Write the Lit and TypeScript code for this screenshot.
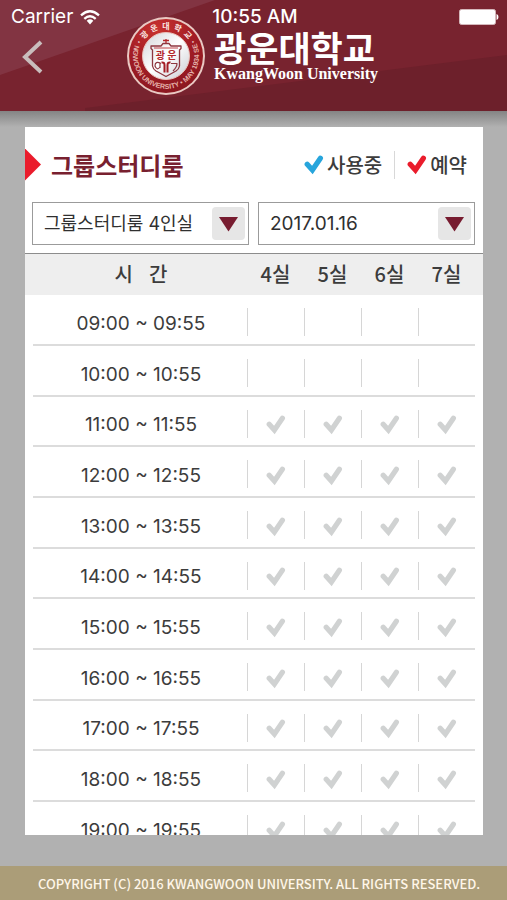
import { LitElement, html, css, svg } from "lit";
import { customElement, property, state } from "lit/decorators.js";

@customElement("check-mark")
class CheckMark extends LitElement {
  @property() label = "";

  static styles = css`
    :host {
      display: inline-block;
      width: 20px;
      height: 20px;
    }
    svg {
      display: block;
    }
  `;

  render() {
    return html`<svg width="20" height="20" viewBox="0 0 20 20" role="img" aria-label=${this.label}>
      <path d="M3.2 9.2 L8.4 15 L16.4 3.2" fill="none" stroke="currentColor" stroke-width="5.2" stroke-linecap="round" stroke-linejoin="miter" />
    </svg>`;
  }
}

@customElement("university-seal")
class UniversitySeal extends LitElement {
  static styles = css`
    :host {
      display: block;
      width: 80px;
      height: 80px;
    }
    svg {
      display: block;
    }
    text {
      font-family: "Noto Sans CJK KR", sans-serif;
      font-weight: 700;
    }
    .ring {
      fill: #fbe9e4;
      font-size: 8px;
    }
    .motto {
      fill: #e5b3ab;
      font-family: "Liberation Sans", sans-serif;
      font-size: 7px;
    }
    .name {
      fill: #b3262c;
      font-size: 10px;
    }
  `;

  render() {
    return html`<svg width="80" height="80" viewBox="0 0 80 80" role="img" aria-label="광운대학교">
      <defs>
        <radialGradient id="rim" cx="40%" cy="15%" r="95%">
          <stop offset="0" stop-color="#c8322f" />
          <stop offset="0.5" stop-color="#a31d25" />
          <stop offset="1" stop-color="#86161f" />
        </radialGradient>
        <linearGradient id="core" x1="0" y1="0" x2="1" y2="1">
          <stop offset="0" stop-color="#d3d3d8" />
          <stop offset="0.5" stop-color="#ffffff" />
          <stop offset="1" stop-color="#c9cbd2" />
        </linearGradient>
        <path id="top-arc" d="M12.500 40 A27.500 27.500 0 0 1 67.500 40" />
        <path id="low-arc" d="M9.600 27 A33 33 0 1 0 70.400 27" />
      </defs>
      <circle cx="40" cy="40" r="39" fill="#e9c9c3" />
      <circle cx="40" cy="40" r="37" fill="url(#rim)" />
      <circle cx="40" cy="40" r="23.500" fill="url(#core)" stroke="#eac3bd" stroke-width="1" />
      ${svg`
        <text class="ring" text-anchor="middle"><textPath href="#top-arc" startOffset="50%">·\u00a0광\u00a0\u00a0운\u00a0\u00a0대\u00a0\u00a0학\u00a0\u00a0교\u00a0·</textPath></text>
        <text class="motto" text-anchor="middle"><textPath href="#low-arc" startOffset="50%">KWANGWOON UNIVERSITY • MAY 1934 SEOUL</textPath></text>
      `}
      <g fill="none" stroke="#8e3740" stroke-width="1.3" stroke-linejoin="round">
        <path d="M25 30 H35 L37 27.500 H43 L45 30 H55 V32.500 L53.500 34 V50 Q53 53 50 55 L40 60.500 L30 55 Q27 53 26.500 50 V34 L25 32.500 Z" />
        <path d="M28 32 H52" stroke="#c2454a" stroke-width="1" />
        <path d="M40 23 V27 M37 24.500 H43" stroke="#b3262c" />
        <path d="M35 47.500 Q29 44.500 29 50 Q31 55 34 51 M34 46.500 V52" stroke-width="1.2" />
        <path d="M45 47.500 H51 Q51 51 47 55" stroke-width="1.2" />
        <path d="M35.500 46.500 Q38.500 46 38.500 49 V56.500 M44.500 46.500 Q41.500 46 41.500 49 V56.500" stroke="#a31d25" stroke-width="2" />
      </g>
      <text class="name" x="40" y="43" text-anchor="middle">광 운</text>
    </svg>`;
  }
}

@customElement("app-root")
class AppRoot extends LitElement {
  @state() room = "그룹스터디룸 4인실";
  @state() date = "2017.01.16";

  private rooms = ["4실", "5실", "6실", "7실"];
  private hours = [9, 10, 11, 12, 13, 14, 15, 16, 17, 18, 19];

  static styles = css`
    :host {
      display: flex;
      flex-direction: column;
      height: 100vh;
      background: #b1b1b1;
      color: #3c3c3c;
      font-family: "Noto Sans CJK KR", sans-serif;
    }
    header {
      display: grid;
      flex: none;
      height: 111px;
      color: #fff;
      background: #78232f;
    }
    header > * {
      grid-area: 1 / 1;
      min-width: 0;
    }
    .facets {
      width: 100%;
      height: 111px;
    }
    .status {
      display: grid;
      grid-template-columns: 1fr auto 1fr;
      align-items: center;
      align-self: start;
      height: 34px;
      padding: 0 8px 0 11px;
      font: 400 19px/34px Inter, sans-serif;
    }
    .carrier {
      display: flex;
      align-items: center;
      gap: 7px;
    }
    .clock {
      font-weight: 500;
    }
    .battery {
      justify-self: end;
    }
    .brand {
      display: flex;
      align-items: start;
      padding: 16px 20px 0;
    }
    .back {
      flex: none;
      width: 28px;
      height: 36px;
      margin: 23px 78px 0 0;
      padding: 0;
      border: 0;
      background: none;
      color: #c9bdbd;
    }
    .wordmark {
      margin: 15px 0 0 8px;
      white-space: nowrap;
    }
    .wordmark h1 {
      margin: 0;
      font: 700 35px/32px "Noto Sans CJK KR", sans-serif;
    }
    .wordmark p {
      margin: 0;
      font: 700 16px/22px "Liberation Serif", serif;
    }
    main {
      display: flex;
      flex: 1;
      min-height: 0;
      padding: 16px 24px 31px 25px;
      background: linear-gradient(#848484, #b1b1b1 16px);
    }
    .card {
      flex: 1;
      min-width: 0;
      overflow-y: auto;
      scrollbar-width: none;
      background: #fff;
    }
    .title {
      display: flex;
      align-items: center;
      height: 75px;
      padding-right: 16px;
      white-space: nowrap;
    }
    .pointer {
      width: 16px;
      height: 32px;
      margin-right: 10px;
      background: #ea1c2c;
      clip-path: polygon(0 0, 100% 50%, 0 100%);
    }
    h2 {
      margin: 0 auto 0 0;
      color: #78202f;
      font-size: 24px;
      font-weight: 700;
      line-height: 32px;
    }
    .legend {
      display: flex;
      align-items: center;
      gap: 3px;
      font-size: 20px;
      font-weight: 500;
      line-height: 28px;
    }
    .legend + .legend {
      margin-left: 12px;
      padding-left: 12px;
      border-left: 1px solid #d8d8d8;
    }
    .using {
      color: #27a5dc;
    }
    .booked {
      color: #ea1c2c;
    }
    .filters {
      display: grid;
      grid-template-columns: 1fr 1fr;
      gap: 9px;
      padding: 0 8px 8px 7px;
    }
    .field {
      position: relative;
    }
    select {
      display: block;
      width: 100%;
      height: 43px;
      padding: 0 40px 0 11px;
      border: 1px solid #9b9b9b;
      border-radius: 0;
      appearance: none;
      background: #fff;
      color: #303030;
      font: 400 18px/26px Inter, "Noto Sans CJK KR", sans-serif;
    }
    .date {
      font-size: 19px;
    }
    .arrow {
      position: absolute;
      top: 5px;
      right: 4px;
      width: 33px;
      height: 33px;
      border-radius: 4px;
      background: #e6e6e6;
      pointer-events: none;
    }
    table {
      width: 100%;
      border-collapse: separate;
      border-spacing: 0;
      table-layout: fixed;
    }
    th,
    td {
      box-sizing: border-box;
      padding: 0;
      text-align: center;
    }
    th:first-child {
      padding-left: 10px;
    }
    .room {
      width: 57px;
    }
    .room:last-child {
      width: 65px;
    }
    th:last-child,
    td:last-child {
      padding-right: 8px;
    }
    thead th {
      height: 42px;
      padding-bottom: 2px;
      border-top: 1px solid #8c8c8c;
      background: #eee;
      font-size: 20px;
      font-weight: 500;
      line-height: 28px;
    }
    .gap {
      margin-right: 16px;
    }
    tbody tr {
      height: 51px;
      background: linear-gradient(#dcdcdc, #dcdcdc) center bottom / calc(100% - 16px) 2px no-repeat;
    }
    tbody tr:nth-child(3n) {
      height: 50px;
    }
    tbody th {
      padding-top: 6px;
      font: 400 19px/26px Inter, sans-serif;
    }
    td {
      padding-top: 6px;
      background: linear-gradient(#d6d6d6, #d6d6d6) left 13px / 1px 28px no-repeat;
      color: #d0d2d2;
      line-height: 0;
    }
    footer {
      flex: none;
      height: 34px;
      padding: 0 28px 0 38px;
      background: #ab9d78;
      color: #fff6e8;
      font: 500 13px/36px "Noto Sans CJK KR", sans-serif;
      text-align: center;
      white-space: nowrap;
    }
  `;

  private arrow() {
    return html`<svg class="arrow" viewBox="0 0 33 33" aria-hidden="true">
      <path d="M7 10 H26 L16.500 24.500 Z" fill="#771c30" />
    </svg>`;
  }

  private row(hour: number) {
    const h = String(hour).padStart(2, "0");
    return html`<tr>
      <th scope="row">${h}:00 ~ ${h}:55</th>
      ${this.rooms.map(() => html`<td>${hour > 10 ? html`<check-mark label="선택 가능"></check-mark>` : ""}</td>`)}
    </tr>`;
  }

  render() {
    return html`
      <header>
        <svg class="facets" viewBox="0 0 507 111" preserveAspectRatio="none" aria-hidden="true">
          <path d="M0 0 H215 L0 75 Z" fill="#823442" />
          <path d="M507 55 L85 108 V111 H507 Z" fill="#6d202b" />
        </svg>
        <div class="brand">
          <button class="back" aria-label="뒤로">
            <svg width="28" height="36" viewBox="0 0 28 36">
              <path d="M21 3 L5 18 L21 33" fill="none" stroke="currentColor" stroke-width="4" />
            </svg>
          </button>
          <university-seal></university-seal>
          <div class="wordmark">
            <h1>광운대학교</h1>
            <p>KwangWoon University</p>
          </div>
        </div>
        <div class="status">
          <span class="carrier">Carrier
            <svg width="20" height="15" viewBox="0 0 20 15" aria-hidden="true">
              <g fill="none" stroke="#fff" stroke-width="2.300">
                <path d="M1 5.300 Q10 -2.800 19 5.300" />
                <path d="M4.300 8.800 Q10 3.600 15.700 8.800" />
              </g>
              <path d="M6.700 10.800 Q10 7.900 13.300 10.800 L10 14.400 Z" fill="#fff" />
            </svg>
          </span>
          <span class="clock">10:55 AM</span>
          <svg class="battery" width="40" height="16" viewBox="0 0 40 16" aria-hidden="true">
            <rect x="0.500" y="0.500" width="36" height="15" rx="2" fill="#fff" stroke="#d5b8bc" />
            <path d="M37.500 5 Q39.500 5.500 39.500 8 T37.500 11 Z" fill="#fff" />
          </svg>
        </div>
      </header>
      <main>
        <section class="card">
          <div class="title">
            <span class="pointer"></span>
            <h2>그룹스터디룸</h2>
            <span class="legend"><check-mark class="using" label=""></check-mark>사용중</span>
            <span class="legend"><check-mark class="booked" label=""></check-mark>예약</span>
          </div>
          <div class="filters">
            <div class="field">
              <select aria-label="시설" .value=${this.room}><option>그룹스터디룸 4인실</option></select>
              ${this.arrow()}
            </div>
            <div class="field">
              <select class="date" aria-label="날짜" .value=${this.date}><option>2017.01.16</option></select>
              ${this.arrow()}
            </div>
          </div>
          <table>
            <thead>
              <tr>
                <th scope="col"><span class="gap">시</span>간</th>
                ${this.rooms.map((r) => html`<th scope="col" class="room">${r}</th>`)}
              </tr>
            </thead>
            <tbody>
              ${this.hours.map((h) => this.row(h))}
            </tbody>
          </table>
        </section>
      </main>
      <footer>COPYRIGHT (C) 2016 KWANGWOON UNIVERSITY. ALL RIGHTS RESERVED.</footer>
    `;
  }
}
